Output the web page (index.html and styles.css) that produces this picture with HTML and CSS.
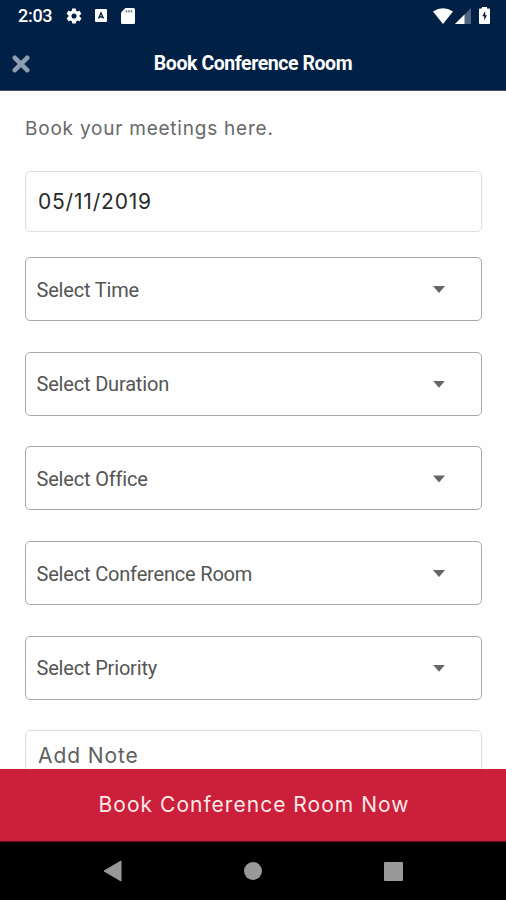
FILE: index.html
```html
<!DOCTYPE html>
<html lang="en">
<head>
<meta charset="utf-8">
<title>Book Conference Room</title>
<link rel="stylesheet" href="styles.css">
</head>
<body>
<div class="screen">
  <header class="top">
    <div class="status">
      <span class="clock">2:03</span>
      <svg class="gear" width="18" height="18" viewBox="0 0 24 24"><path fill="#fff" fill-rule="evenodd" d="M19.4 13a7.500 7.500 0 0 0 0-2l2.100-1.700c.2-.1.300-.4.100-.6l-2-3.500c-.1-.2-.4-.3-.6-.2l-2.500 1a7.300 7.300 0 0 0-1.700-1l-.4-2.600c0-.2-.2-.4-.5-.4h-4c-.2 0-.4.200-.5.400L9.100 5a7.600 7.600 0 0 0-1.700 1L4.900 5c-.2-.1-.5 0-.6.200l-2 3.500c-.1.200-.1.500.1.600L4.600 11a7.500 7.500 0 0 0 0 2l-2.100 1.700c-.2.100-.3.400-.1.600l2 3.500c.1.200.4.300.6.200l2.500-1c.5.400 1.100.7 1.700 1l.4 2.600c0 .2.200.4.500.4h4c.2 0 .4-.2.500-.4l.4-2.600a7.300 7.300 0 0 0 1.700-1l2.500 1c.2.100.5 0 .6-.2l2-3.500c.1-.2.100-.5-.1-.6zM12 15.400a3.400 3.400 0 1 1 0-6.800 3.400 3.400 0 0 1 0 6.800z"/></svg>
      <svg class="card-a" width="12" height="13" viewBox="0 0 12 13"><rect width="12" height="13" rx="1" fill="#fff"/><path d="M3.500 9.500 6 3.800l2.500 5.700M4.700 8h2.600" fill="none" stroke="#002145" stroke-width="1.300"/></svg>
      <svg class="sd" width="14" height="16" viewBox="0 0 14 16"><path fill="#fff" d="M4.500 0H12.500Q14 0 14 1.500V14.500Q14 16 12.500 16H1.500Q0 16 0 14.500V4.500z"/><path d="M5.500 2v2.500M8 2v2.500M10.500 2v2.500" stroke="#7f8fa2" stroke-width="1.600"/></svg>
      <span class="spacer"></span>
      <svg width="20" height="16" viewBox="0 0 20 16"><path fill="#fff" d="M0 3.500Q10-3 20 3.500L10 16z"/></svg>
      <svg class="signal" width="16" height="16" viewBox="0 0 16 16"><path fill="#4d6580" d="M16 0V16H0z"/><path fill="#fff" d="M9.500 6.500V16H0z"/></svg>
      <svg class="battery" width="11" height="17" viewBox="0 0 11 17"><path fill="#fff" d="M3 0h5v1.500h2q1 0 1 1V16q0 1-1 1H1q-1 0-1-1V2.500q0-1 1-1h2z"/><path fill="#002145" d="M6.200 4 3.200 9.200h2V13.500L8 8.300H6.200z"/></svg>
    </div>
    <div class="bar">
      <svg class="close" width="18" height="18" viewBox="0 0 18 18"><path d="M2.800 2.800l12.400 12.400M15.200 2.800L2.800 15.200" stroke="#8e9db1" stroke-width="4.600" stroke-linecap="round"/></svg>
      <h1 class="title">Book Conference Room</h1>
    </div>
  </header>
  <main class="form">
    <p class="intro">Book your meetings here.</p>
    <div class="field date"><span>05/11/2019</span></div>
    <div class="selects">
      <div class="field select"><span>Select Time</span><i class="arrow"></i></div>
      <div class="field select"><span>Select Duration</span><i class="arrow"></i></div>
      <div class="field select"><span>Select Office</span><i class="arrow"></i></div>
      <div class="field select"><span>Select Conference Room</span><i class="arrow"></i></div>
      <div class="field select"><span>Select Priority</span><i class="arrow"></i></div>
    </div>
    <div class="field note"><span>Add Note</span></div>
  </main>
  <div class="submit"><span>Book Conference Room Now</span></div>
  <nav class="nav">
    <svg width="19" height="22" viewBox="0 0 19 22"><path d="M18 1v20L1 11z" fill="#999" stroke="#999" stroke-linejoin="round"/></svg>
    <svg width="18" height="18" viewBox="0 0 18 18"><circle cx="9" cy="9" r="9" fill="#999"/></svg>
    <svg width="19" height="19" viewBox="0 0 19 19"><rect width="19" height="19" rx="1" fill="#999"/></svg>
  </nav>
</div>
</body>
</html>
```
FILE: styles.css
```css
* { box-sizing: border-box; }
body { margin: 0; background: #fff; font-family: Roboto, sans-serif; }
svg { display: block; flex: none; }
.screen { width: 506px; height: 900px; display: flex; flex-direction: column; overflow: hidden; background: #fefefe; }
.top { height: 91px; flex: none; background: #002145; border-bottom: 1px solid #4a4a66; color: #fff; }
.status { height: 31px; display: flex; align-items: center; padding: 0 16px 0 18px; }
.clock { width: 47px; font-size: 18px; font-weight: 500; letter-spacing: -0.3px; }
.card-a { margin-left: 12px; }
.sd { margin-left: 14px; }
.spacer { flex: 1; }
.signal { margin-left: 2px; }
.battery { margin-left: 8px; }
.bar { height: 59px; display: grid; grid-template-columns: 40px 1fr 40px; align-items: center; }
.close { margin: 6px 0 0 12px; }
.title { margin: 6px 0 0; font-size: 19.500px; line-height: 24px; font-weight: 700; letter-spacing: -0.44px; text-align: center; white-space: nowrap; }
.form { height: 678px; flex: none; padding: 25px 24px 0 25px; overflow: hidden; }
.intro { margin: 0 0 42px; height: 13px; font: 400 19px/26px Inter, sans-serif; letter-spacing: 0.78px; color: #696969; white-space: nowrap; }
.field { border: 1px solid #dedede; border-radius: 5px; display: flex; align-items: center; white-space: nowrap; }
.date { height: 61px; padding-left: 12px; font: 400 21px Inter, sans-serif; letter-spacing: 0.8px; color: #2a2a2a; }
.selects { margin-top: 25px; display: grid; gap: 30.700px; }
.select { height: 64px; border-color: #aaa; padding: 1px 36px 0 10.500px; justify-content: space-between; font-size: 20px; letter-spacing: -0.18px; color: #555; }
.arrow { width: 12px; height: 7px; background: #666; clip-path: polygon(0 0, 100% 0, 50% 100%); }
.note { margin-top: 30.200px; height: 120px; padding: 12px 0 0 12px; align-items: flex-start; font: 400 21px/26px Inter, sans-serif; letter-spacing: 0.9px; color: #606060; }
.submit { height: 73px; flex: none; display: flex; align-items: center; justify-content: center; background: #cc1f3b; border-bottom: 1px solid #6b1020; color: #ffe9e6; font: 400 21px/26px Inter, sans-serif; letter-spacing: 1.020px; padding-left: 2px; white-space: nowrap; }
.nav { flex: 1; background: #000; display: flex; align-items: center; justify-content: space-between; padding: 0 103px; }
```
